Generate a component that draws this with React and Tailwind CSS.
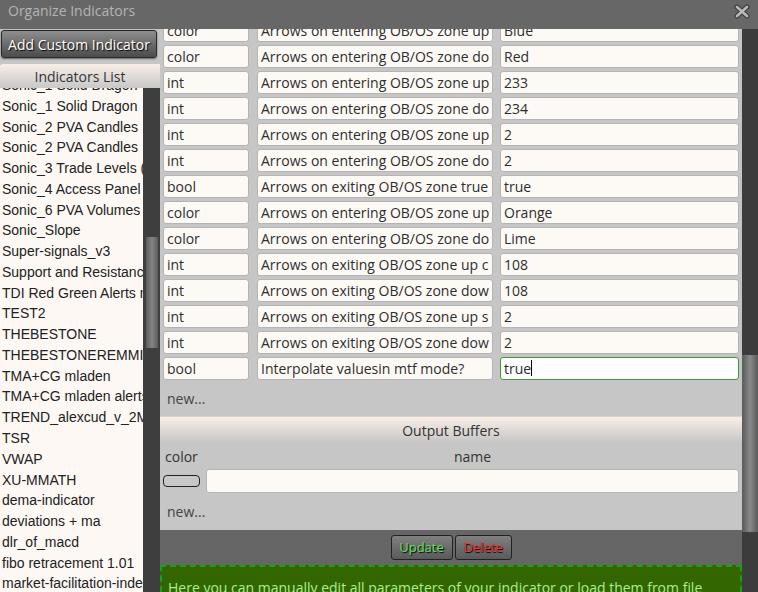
import React from 'react';

const params = [
  ['color', 'Arrows on entering OB/OS zone up', 'Blue'],
  ['color', 'Arrows on entering OB/OS zone do', 'Red'],
  ['int', 'Arrows on entering OB/OS zone up', '233'],
  ['int', 'Arrows on entering OB/OS zone do', '234'],
  ['int', 'Arrows on entering OB/OS zone up', '2'],
  ['int', 'Arrows on entering OB/OS zone do', '2'],
  ['bool', 'Arrows on exiting OB/OS zone true', 'true'],
  ['color', 'Arrows on entering OB/OS zone up', 'Orange'],
  ['color', 'Arrows on entering OB/OS zone do', 'Lime'],
  ['int', 'Arrows on exiting OB/OS zone up c', '108'],
  ['int', 'Arrows on exiting OB/OS zone dow', '108'],
  ['int', 'Arrows on exiting OB/OS zone up s', '2'],
  ['int', 'Arrows on exiting OB/OS zone dow', '2'],
];

const indicators = [
  'Sonic_1 Solid Dragon',
  'Sonic_1 Solid Dragon',
  'Sonic_2 PVA Candles',
  'Sonic_2 PVA Candles',
  'Sonic_3 Trade Levels (1)',
  'Sonic_4 Access Panel',
  'Sonic_6 PVA Volumes',
  'Sonic_Slope',
  'Super-signals_v3',
  'Support and Resistance',
  'TDI Red Green Alerts mtf',
  'TEST2',
  'THEBESTONE',
  'THEBESTONEREMMI',
  'TMA+CG mladen',
  'TMA+CG mladen alerts',
  'TREND_alexcud_v_2MTF',
  'TSR',
  'VWAP',
  'XU-MMATH',
  'dema-indicator',
  'deviations + ma',
  'dlr_of_macd',
  'fibo retracement 1.01',
  'market-facilitation-index',
];

const box = 'h-[23px] px-[3px] bg-[#fdf9f5] border border-[#b4b4b4] rounded-[3px] text-[14px] leading-[21px] text-[#2e2e2e] whitespace-nowrap overflow-hidden';

const ParamRow = ({ type, desc, value }) => (
  <div className="flex h-[26px] items-center">
    <div className={`${box} w-[86px]`}>{type}</div>
    <div className={`${box} w-[236px] ml-[8px]`}>{desc}</div>
    <div className={`${box} w-[239px] ml-[7px]`}>{value}</div>
  </div>
);

export default function App() {
  return (
    <div className="w-[758px] h-[592px] flex flex-col bg-[#666] overflow-hidden font-['Open_Sans',sans-serif]">
      {/* title bar */}
      <div className="h-[29px] flex items-start justify-between bg-[#676767]">
        <div className="pl-[8px] pt-[1px] text-[14px] leading-[20px] text-[#b4b4b4]">Organize Indicators</div>
        <svg width="16" height="15" viewBox="0 0 16 15" className="mt-[4px] mr-[8px]">
          <path d="M3 3 L13 12 M13 3 L3 12" stroke="#3a3a3a" strokeWidth="5" strokeLinecap="round" />
          <path d="M3 3 L13 12 M13 3 L3 12" stroke="#b8b8b8" strokeWidth="2.8" strokeLinecap="round" />
        </svg>
      </div>

      <div className="flex flex-1 min-h-0">
        {/* left column */}
        <div className="w-[160px] flex flex-col bg-[#c6c6c6]">
          <div className="pt-[1px] pl-[1px]">
            <div className="w-[156px] h-[28px] rounded-[3px] border border-[#2a2a2a] bg-gradient-to-b from-[#8e8e8e] to-[#4c4c4c] shadow-[0_1px_2px_rgba(0,0,0,0.5)] flex items-center justify-center text-[14px] text-white [text-shadow:1px_1px_1px_#000]">
              Add Custom Indicator
            </div>
          </div>
          <div className="mt-[6px] h-[24px] rounded-tl-[3px] bg-gradient-to-b from-[#f8eee7] to-[#c9c9c9] flex items-center justify-center text-[14px] text-[#333]">
            Indicators List
          </div>
          <div className="flex flex-1 min-h-0">
            <div className="w-[143px] bg-[#fdf8f4] overflow-hidden">
              <div className="-mt-[13px] font-['Liberation_Sans',Arial,sans-serif] text-[14px] text-[#222]">
                {indicators.map((name, i) => (
                  <div key={i} className="h-[20.78px] leading-[20.78px] pl-[2px] whitespace-nowrap">{name}</div>
                ))}
              </div>
            </div>
            <div className="w-[17px] bg-[#3e3e3e] flex flex-col items-center">
              <div className="mt-[149px] w-[12px] h-[111px] bg-gradient-to-r from-[#5c5c5c] via-[#858585] to-[#5c5c5c]" />
            </div>
          </div>
        </div>

        {/* right content */}
        <div className="w-[582px] overflow-hidden bg-[#c6c6c6]">
          <div className="-mt-[12px]">
            <div className="pl-[3px]">
              {params.map(([t, d, v], i) => (
                <ParamRow key={i} type={t} desc={d} value={v} />
              ))}
              <div className="flex h-[26px] items-center">
                <div className={`${box} w-[86px]`}>bool</div>
                <div className={`${box} w-[236px] ml-[8px]`}>Interpolate valuesin mtf mode?</div>
                <div className="h-[23px] w-[239px] ml-[7px] px-[3px] bg-white border border-[#3d9a3d] rounded-[3px] text-[14px] leading-[21px] text-[#2e2e2e] flex items-center">
                  true<span className="w-[1px] h-[16px] bg-black" />
                </div>
              </div>
            </div>
            <div className="h-[35px] flex items-center pl-[7px] text-[14px] text-[#444]">new...</div>
            <div className="h-[27px] border-t border-[#d8d2cc] bg-gradient-to-b from-[#f9eee6] to-[#c6c6c6] flex items-center justify-center text-[14px] text-[#333]">
              Output Buffers
            </div>
            <div className="h-[26px] flex items-center text-[14px] text-[#333]">
              <div className="w-[46px] pl-[5px]">color</div>
              <div className="w-[533px] text-center">name</div>
            </div>
            <div className="h-[24px] flex items-center">
              <div className="ml-[3px] w-[37px] h-[12px] rounded-[4px] border border-[#222] bg-[#c8c8c8]" />
              <div className="ml-[6px] w-[533px] h-[24px] bg-[#fdf9f5] border border-[#b4b4b4] rounded-[3px]" />
            </div>
            <div className="h-[37px] flex items-center pl-[7px] text-[14px] text-[#444]">new...</div>
            <div className="h-[35px] bg-[#666] flex items-center justify-center gap-[2px]">
              <div className="w-[62px] h-[25px] rounded-[3px] border border-[#222] bg-gradient-to-b from-[#808080] to-[#5a5a5a] flex items-center justify-center text-[13px] text-[#5ee05e] [text-shadow:1px_1px_1px_#000]">
                Update
              </div>
              <div className="w-[57px] h-[25px] rounded-[3px] border border-[#222] bg-gradient-to-b from-[#808080] to-[#5a5a5a] flex items-center justify-center text-[13px] text-[#ee3333] [text-shadow:1px_1px_1px_#000]">
                Delete
              </div>
            </div>
            <div className="h-[80px] bg-[#336600] border-2 border-dashed border-[#1aa01a] pl-[6px] pt-[10px] text-[14px] text-[#a8f090]">
              Here you can manually edit all parameters of your indicator or load them from file
            </div>
          </div>
        </div>

        {/* right scrollbar */}
        <div className="w-[16px] bg-[#3c3c3c] flex flex-col">
          <div className="mt-[326px] h-[177px] bg-gradient-to-r from-[#5a5a5a] via-[#8a8a8a] to-[#5a5a5a]" />
        </div>
      </div>
    </div>
  );
}
